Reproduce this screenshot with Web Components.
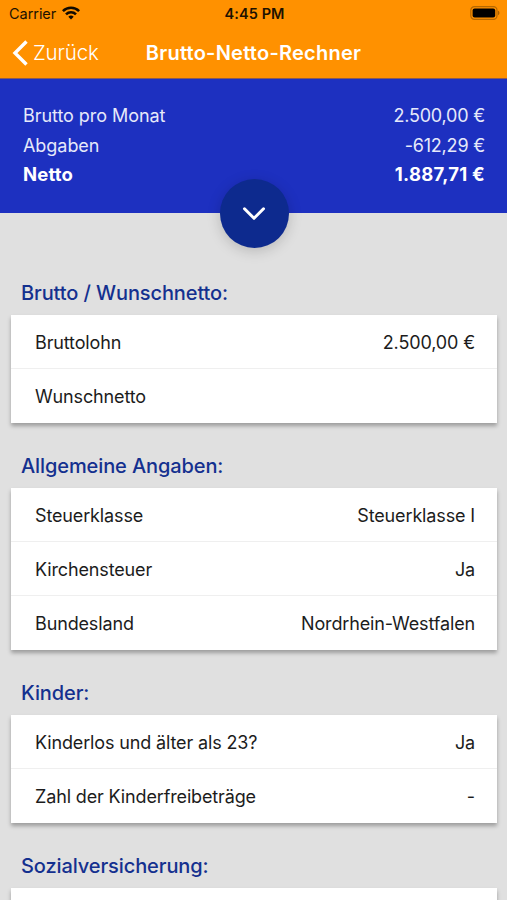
<!DOCTYPE html>
<html lang="de">
<head>
<meta charset="UTF-8">
<meta name="viewport" content="width=device-width, initial-scale=1">
<title>Brutto-Netto-Rechner</title>
<style>
    body {
        margin: 0;
        height: 100vh;
        overflow: hidden;
        background: #e0e0e0;
        font-family: Inter, "Liberation Sans", sans-serif;
        color: #1c1c1c;
    }
</style>
</head>
<body>
<rechner-app>
    <status-bar slot="cabecera" carrier="Carrier" hora="4:45 PM"></status-bar>
    <nav-bar slot="cabecera" volver="Zurück">Brutto-Netto-Rechner</nav-bar>
    <resumen-panel slot="cabecera">
        <resumen-linea valor="2.500,00 €">Brutto pro Monat</resumen-linea>
        <resumen-linea valor="-612,29 €">Abgaben</resumen-linea>
        <resumen-linea valor="1.887,71 €" total>Netto</resumen-linea>
    </resumen-panel>
    <form-seccion titulo="Brutto / Wunschnetto:">
        <form-fila valor="2.500,00 €">Bruttolohn</form-fila>
        <form-fila>Wunschnetto</form-fila>
    </form-seccion>
    <form-seccion titulo="Allgemeine Angaben:">
        <form-fila valor="Steuerklasse I">Steuerklasse</form-fila>
        <form-fila valor="Ja">Kirchensteuer</form-fila>
        <form-fila valor="Nordrhein-Westfalen">Bundesland</form-fila>
    </form-seccion>
    <form-seccion titulo="Kinder:">
        <form-fila valor="Ja">Kinderlos und älter als 23?</form-fila>
        <form-fila valor="-">Zahl der Kinderfreibeträge</form-fila>
    </form-seccion>
    <form-seccion titulo="Sozialversicherung:">
        <form-fila></form-fila>
    </form-seccion>
</rechner-app>

<script>
// Clase base: clona el html en el shadow root
class Componente extends HTMLElement {
    constructor() {
        super();
        this.attachShadow({ mode: "open" });
    }
    connectedCallback() {
        const template = document.createElement('template');
        template.innerHTML = this.html();
        this.shadowRoot.appendChild(template.content.cloneNode(true));
    }
    attr(nombre) {
        return this.getAttribute(nombre) || "";
    }
}

class RechnerApp extends Componente {
    html() {
        return `
<style>
:host { display: flex; flex-direction: column; height: 100vh; overflow: hidden; }
header { flex: none; }
main { flex: 1; min-height: 0; overflow: hidden; padding: 37px 10px 0 11px; }
</style>
<header><slot name="cabecera"></slot></header>
<main><slot></slot></main>`;
    }
}

class StatusBar extends Componente {
    html() {
        return `
<style>
:host {
    display: grid;
    grid-template-columns: 1fr auto 1fr;
    align-items: center;
    height: 27px;
    padding: 0 7px 0 9px;
    background: #ff9100;
    color: #1d1200;
    font-size: 14.5px;
}
.izq { display: flex; align-items: center; gap: 6px; letter-spacing: -0.05px; }
.hora { font-weight: 600; letter-spacing: 0.1px; }
svg { display: block; }
.izq svg { margin-top: -2px; }
.bateria { justify-self: end; margin-top: -1px; }
</style>
<div class="izq">
    <span>${this.attr("carrier")}</span>
    <svg width="18" height="14" viewBox="0 0 18 14" fill="none" stroke="#120b00" stroke-width="2.6">
        <path d="M.9 5.1a11.6 11.6 0 0 1 16.2 0"/>
        <path d="M4 8.3a7.1 7.1 0 0 1 10 0"/>
        <path d="M9 13.6 6.3 10.8a4 4 0 0 1 5.4 0z" fill="#120b00" stroke="none"/>
    </svg>
</div>
<span class="hora">${this.attr("hora")}</span>
<svg class="bateria" width="30" height="14" viewBox="0 0 30 14">
    <rect x=".8" y=".7" width="26.2" height="12.6" rx="3.6" fill="none" stroke="#b56800" stroke-width="1.2"/>
    <rect x="2.6" y="2.5" width="22.6" height="9" rx="2" fill="#000"/>
    <path d="M28 4.8c1.9.6 1.9 3.8 0 4.4z" fill="#a96000"/>
</svg>`;
    }
}

class NavBar extends Componente {
    html() {
        return `
<style>
:host {
    display: grid;
    grid-template-columns: 1fr auto 1fr;
    align-items: center;
    box-sizing: border-box;
    height: 52px;
    padding: 0 12px;
    border-bottom: 1px solid #8a5a55;
    background: #ff9100;
    color: #fff;
}
.volver { display: flex; align-items: center; gap: 5px; font-size: 20.5px; font-weight: 300; letter-spacing: -0.15px; }
h1 { margin: 0; font-size: 20px; font-weight: 600; letter-spacing: 0.25px; line-height: 24px; white-space: nowrap; }
</style>
<div class="volver">
    <svg width="16" height="26" viewBox="0 0 16 26" fill="none" stroke="#fff" stroke-width="3.4">
        <path d="M14.5 1.500 3 13l11.500 11.500"/>
    </svg>
    <span>${this.attr("volver")}</span>
</div>
<h1><slot></slot></h1>`;
    }
}

class ResumenPanel extends Componente {
    html() {
        return `
<style>
:host {
    display: block;
    position: relative;
    box-sizing: border-box;
    height: 134px;
    padding: 22.4px 22px 0 23px;
    background: #1d30c0;
    color: #fff;
}
button {
    position: absolute;
    left: 50%;
    bottom: -35px;
    margin-left: -34px;
    width: 69px;
    height: 69px;
    padding: 0;
    border: 0;
    border-radius: 50%;
    background: #0d2a8e;
    box-shadow: 0 3px 14px rgba(0, 0, 0, .18);
    display: flex;
    align-items: center;
    justify-content: center;
}
</style>
<slot></slot>
<button aria-label="Details">
    <svg width="24" height="16" viewBox="0 0 24 16" fill="none" stroke="#fff" stroke-width="3" stroke-linecap="round" stroke-linejoin="round">
        <path d="M2.500 2.800 12 12.300l9.500-9.500"/>
    </svg>
</button>`;
    }
}

class ResumenLinea extends Componente {
    html() {
        return `
<style>
:host {
    display: flex;
    justify-content: space-between;
    font-size: 18px;
    line-height: 29.3px;
    letter-spacing: -0.05px;
    color: #e6e9fa;
}
.valor { letter-spacing: -0.2px; }
:host([total]) { font-size: 18.5px; font-weight: 700; letter-spacing: 0.15px; color: #fff; }
:host([total]) .valor { letter-spacing: 0.25px; }
</style>
<span><slot></slot></span>
<span class="valor">${this.attr("valor")}</span>`;
    }
}

class FormSeccion extends Componente {
    html() {
        return `
<style>
:host { display: block; }
h2 {
    margin: 0;
    height: 65px;
    padding: 31px 10px 0;
    box-sizing: border-box;
    font-size: 20px;
    font-weight: 500;
    line-height: 24px;
    letter-spacing: -0.1px;
    color: #14308f;
}
.tarjeta { background: #fff; box-shadow: 0 3px 4px rgba(0, 0, 0, .3); }
</style>
<h2>${this.attr("titulo")}</h2>
<div class="tarjeta"><slot></slot></div>`;
    }
}

class FormFila extends Componente {
    html() {
        return `
<style>
:host {
    display: flex;
    justify-content: space-between;
    align-items: center;
    box-sizing: border-box;
    height: 54px;
    padding: 2px 22px 0 24px;
    border-bottom: 1px solid #efefef;
    font-size: 18px;
    letter-spacing: -0.14px;
}
:host(:last-child) { border-bottom-color: transparent; }
</style>
<span><slot></slot></span>
<span>${this.attr("valor")}</span>`;
    }
}

customElements.define("rechner-app", RechnerApp);
customElements.define("status-bar", StatusBar);
customElements.define("nav-bar", NavBar);
customElements.define("resumen-panel", ResumenPanel);
customElements.define("resumen-linea", ResumenLinea);
customElements.define("form-seccion", FormSeccion);
customElements.define("form-fila", FormFila);
</script>
</body>
</html>
